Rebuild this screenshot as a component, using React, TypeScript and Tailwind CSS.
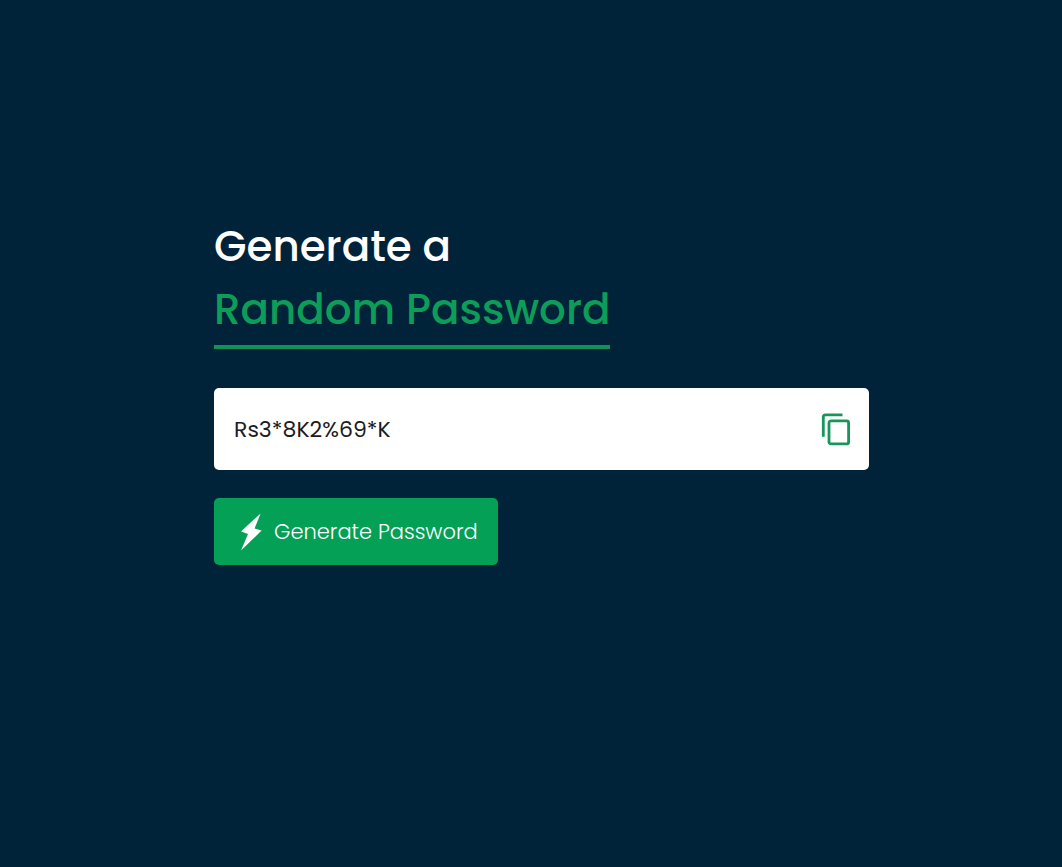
import { useState } from "react";

const CHARS = "ABCDEFGHIJKLMNOPQRSTUVWXYZabcdefghijklmnopqrstuvwxyz0123456789@#$%&*";

function randomPassword(length: number): string {
  return Array.from({ length }, () => CHARS[Math.floor(Math.random() * CHARS.length)]).join("");
}

function CopyIcon() {
  return (
    <svg viewBox="0 0 30 34" className="h-[34px] w-[30px]" fill="none" stroke="#18965a" strokeWidth="2.8" aria-hidden="true">
      <path d="M2.3 24.8V4.9Q2.3 2.9 4.3 2.9H21.5" />
      <rect x="8" y="8.9" width="19.6" height="23" rx="2" />
    </svg>
  );
}

function BoltIcon() {
  return (
    <svg viewBox="0 0 22 38" className="h-[38px] w-[22px]" fill="#ffffff" aria-hidden="true">
      <path d="M20.6 .4 1 18.4 8 20.9 1 37.6 21.6 17.6 14.6 15.4Z" />
    </svg>
  );
}

export default function App() {
  const [password, setPassword] = useState("Rs3*8K2%69*K");

  return (
    <main className="min-h-screen bg-[#002339] px-6 pt-[215px] pb-12 font-['Poppins','Inter',sans-serif] text-white md:pl-[214px]">
      <div className="w-full max-w-[655px]">
        <h1 className="text-[42px] leading-[63px] font-medium">
          Generate a
          <br />
          <span className="inline-block border-b-4 border-[#138f59] pb-1 text-[#0e9d58]">Random Password</span>
        </h1>
        <div className="mt-[39px] flex h-[82px] items-center rounded-[5px] bg-white pr-[18px] pl-5">
          <input
            type="text"
            aria-label="Password"
            value={password}
            onChange={(event) => setPassword(event.target.value)}
            className="min-w-0 flex-1 bg-transparent text-[22px] text-[#1b1b1f] outline-none"
          />
          <button type="button" aria-label="Copy password" onClick={() => navigator.clipboard?.writeText(password)}>
            <CopyIcon />
          </button>
        </div>
        <button
          type="button"
          onClick={() => setPassword(randomPassword(12))}
          className="mt-7 flex h-[67px] items-center gap-3 rounded-[5px] bg-[#04a056] pr-5 pl-[26px] text-[21px] font-light whitespace-nowrap"
        >
          <BoltIcon />
          Generate Password
        </button>
      </div>
    </main>
  );
}
